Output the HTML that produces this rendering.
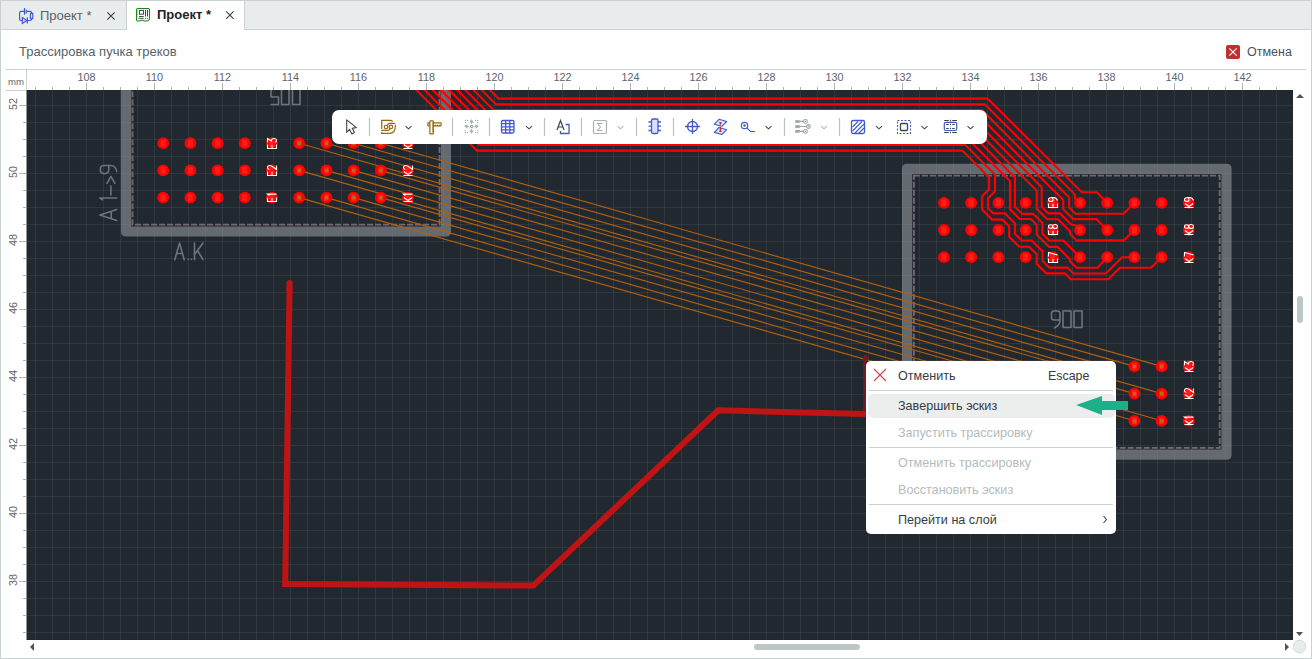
<!DOCTYPE html>
<html><head><meta charset="utf-8"><style>
*{box-sizing:border-box}
html,body{margin:0;padding:0;width:1312px;height:659px;overflow:hidden;background:#fff;font-family:"Liberation Sans",sans-serif}
.a{position:absolute}
</style></head><body>
<svg width="1312" height="659" viewBox="0 0 1312 659" style="position:absolute;left:0;top:0">
<defs><clipPath id="cv"><rect x="26.5" y="90" width="1266.5" height="550"/></clipPath></defs>
<rect x="26.5" y="90" width="1266.5" height="550" fill="#222830"/>
<g clip-path="url(#cv)">
<path d="M35.5 90V640M52.5 90V640M69.5 90V640M86.5 90V640M103.5 90V640M120.5 90V640M137.5 90V640M154.5 90V640M171.5 90V640M188.5 90V640M205.5 90V640M222.5 90V640M239.5 90V640M256.5 90V640M273.5 90V640M290.5 90V640M307.5 90V640M324.5 90V640M341.5 90V640M358.5 90V640M375.5 90V640M392.5 90V640M409.5 90V640M426.5 90V640M443.5 90V640M460.5 90V640M477.5 90V640M494.5 90V640M511.5 90V640M528.5 90V640M545.5 90V640M562.5 90V640M579.5 90V640M596.5 90V640M613.5 90V640M630.5 90V640M647.5 90V640M664.5 90V640M681.5 90V640M698.5 90V640M715.5 90V640M732.5 90V640M749.5 90V640M766.5 90V640M783.5 90V640M800.5 90V640M817.5 90V640M834.5 90V640M851.5 90V640M868.5 90V640M885.5 90V640M902.5 90V640M919.5 90V640M936.5 90V640M953.5 90V640M970.5 90V640M987.5 90V640M1004.5 90V640M1021.5 90V640M1038.5 90V640M1055.5 90V640M1072.5 90V640M1089.5 90V640M1106.5 90V640M1123.5 90V640M1140.5 90V640M1157.5 90V640M1174.5 90V640M1191.5 90V640M1208.5 90V640M1225.5 90V640M1242.5 90V640M1259.5 90V640M1276.5 90V640" stroke="rgb(230,222,240)" stroke-opacity="0.075" stroke-width="1" fill="none"/>
<path d="M26.5 88.5H1293M26.5 105.5H1293M26.5 122.5H1293M26.5 139.5H1293M26.5 156.5H1293M26.5 173.5H1293M26.5 190.5H1293M26.5 207.5H1293M26.5 224.5H1293M26.5 241.5H1293M26.5 258.5H1293M26.5 275.5H1293M26.5 292.5H1293M26.5 309.5H1293M26.5 326.5H1293M26.5 343.5H1293M26.5 360.5H1293M26.5 377.5H1293M26.5 394.5H1293M26.5 411.5H1293M26.5 428.5H1293M26.5 445.5H1293M26.5 462.5H1293M26.5 479.5H1293M26.5 496.5H1293M26.5 513.5H1293M26.5 530.5H1293M26.5 547.5H1293M26.5 564.5H1293M26.5 581.5H1293M26.5 598.5H1293M26.5 615.5H1293M26.5 632.5H1293" stroke="rgb(230,222,240)" stroke-opacity="0.075" stroke-width="1" fill="none"/>
<path d="M126 40H446Q451 40 451 45V231.6Q451 236.6 446 236.6H126Q121 236.6 121 231.6V45Q121 40 126 40ZM131.2 50.2V226.4H440.8V50.2Z" fill="#9aa0a6" fill-opacity="0.55" fill-rule="evenodd"/>
<path d="M907 163.8H1226.6Q1231.6 163.8 1231.6 168.8V454.8Q1231.6 459.8 1226.6 459.8H907Q902 459.8 902 454.8V168.8Q902 163.8 907 163.8ZM912.2 174V449.6H1221.4V174Z" fill="#9aa0a6" fill-opacity="0.55" fill-rule="evenodd"/>
<rect x="132.5" y="30" width="307" height="194.6" fill="none" stroke="#78676f" stroke-width="1.8" stroke-dasharray="6 2"/>
<rect x="913.9" y="175.7" width="305.8" height="272.2" fill="none" stroke="#78676f" stroke-width="1.8" stroke-dasharray="6 2"/>
<path d="M174.8 259.7L179.5 243L184.2 259.7M176.5 253.5H182.5M194.5 243V259.7M203 243L194.5 254.5M197.5 250.5L203 259.7M188 259.3h0.3M191.2 259.3h0.3M271 80V97H278.5V104.5H271M281.5 80V104.5H289V80M292.5 80V104.5H300V80M1060 320H1054Q1051.5 320 1051.5 317.5V313.5Q1051.5 311 1054 311H1057.5Q1060 311 1060 313.5V321Q1060 325 1054.5 328M1063 311H1071V327.5H1063ZM1074 311H1082V327.5H1074Z" stroke="#6d737a" stroke-width="1.6" fill="none" stroke-linecap="round" stroke-linejoin="round"/>
<g transform="translate(99.7 220.4) rotate(-90)"><path d="M0 17L5.4 0.2L10.8 17M2.4 11.5H8.4M20.5 2.8L22.4 0.2V17M25.5 11.2H34.3M37.1 7.3L44 11.2L37.1 15.2M54.9 9V4Q54.9 0.6 50.8 0.6Q46.7 0.6 46.7 4.8Q46.7 9.1 50.8 9.1H54.9V11Q54.9 16 49 17" stroke="#6d737a" stroke-width="1.6" fill="none" stroke-linecap="round" stroke-linejoin="round"/></g>
<path d="M299.2 143.2L1080 366.4M299.2 170.4L1080 393.6M299.2 197.6L1080 420.8M326.4 143.2L1107.2 366.4M326.4 170.4L1107.2 393.6M326.4 197.6L1107.2 420.8M353.6 143.2L1134.4 366.4M353.6 170.4L1134.4 393.6M353.6 197.6L1134.4 420.8M380.8 143.2L1161.6 366.4M380.8 170.4L1161.6 393.6M380.8 197.6L1161.6 420.8" stroke="#b0600c" stroke-width="1.15" fill="none"/>
<path d="M408.5 8.6L498.5 98.6L987.6 98.6L1081.8 192.3L1096.8 192.3L1107.2 202.8M406.11 14.38L496.11 104.38L984.8 104.38L1075 194.6L1075 199L1080 202.8M403.72 20.16L493.72 110.16L982 110.16L1069.2 197.4L1069.2 207.5L1075.4 213.7L1123.7 213.7L1134.4 202.8M401.33 25.94L491.33 115.94L979.2 115.94L1063.3 200.1L1063.3 209.2L1073.2 219.1L1096.4 219.1L1107.2 230M398.94 31.72L488.94 121.72L976.4 121.72L1041.7 187.2L1041.7 206.7L1048.4 213.4L1060 213.4L1071.6 225L1075 225L1080 230M396.55 37.5L486.55 127.5L973.6 127.5L1036.7 190.6L1036.7 208.8L1047.1 219.2L1058 219.2L1070 231.2L1070 233.8L1076.4 240.4L1123.7 240.4L1134.4 230M394.16 43.28L484.16 133.28L970.8 133.28L1015 177.5L1015 206.7L1022.2 213.9L1033.4 213.9L1042.5 223L1042.5 233.8L1049.2 240.5L1063.4 240.5L1080 257.2M391.77 49.06L481.77 139.06L968 139.06L1010 181.1L1010 209.2L1019.8 219L1030.9 219L1036.7 224.8L1036.7 234.6L1049 246.9L1057.5 246.9L1070 259.4L1070 261.3L1076.4 267.7L1097.5 267.7L1107.2 257.2M389.38 54.84L479.38 144.84L965.2 144.84L995 174.6L995 191.3L987.9 198.4L987.9 208L993.3 213.4L1005 213.4L1015 223.4L1015 233.8L1021.7 240.5L1031.7 240.5L1042.5 251.3L1042.5 260.9L1049.2 267.6L1067.5 267.6L1073.4 273.5L1105.8 273.5L1122.2 257.2L1134.4 257.2M386.99 60.62L476.99 150.62L962.4 150.62L989.2 177.4L989.2 189.2L982.1 196.3L982.1 209.6L992.1 219.6L1002.5 219.6L1009.2 226.3L1009.2 236.7L1019.2 246.7L1029.2 246.7L1036.7 254.2L1036.7 263.8L1046.3 273.4L1065 273.4L1070.8 279.2L1108.3 279.2L1119.8 267.8L1151.2 267.8L1161.6 257.2" stroke="#ff0000" stroke-width="2.1" fill="none" stroke-linejoin="miter"/>
<path d="M865.5 357V413" stroke="#6e1b24" stroke-width="4.5" stroke-linecap="round" fill="none"/>
<path d="M289.6 286L285.2 584L533.3 585.6L718.2 410.3L866 414" stroke="#c01414" stroke-width="6" stroke-linejoin="miter" fill="none"/>
<path d="M289.6 283L289.4 290" stroke="#c01414" stroke-width="6" stroke-linecap="round" fill="none"/>
<g fill="#ff0000"><circle cx="163.2" cy="143.2" r="5.9"/><circle cx="190.4" cy="143.2" r="5.9"/><circle cx="217.6" cy="143.2" r="5.9"/><circle cx="244.8" cy="143.2" r="5.9"/><circle cx="272" cy="143.2" r="5.9"/><circle cx="299.2" cy="143.2" r="5.9"/><circle cx="326.4" cy="143.2" r="5.9"/><circle cx="353.6" cy="143.2" r="5.9"/><circle cx="380.8" cy="143.2" r="5.9"/><circle cx="408" cy="143.2" r="5.9"/><circle cx="163.2" cy="170.4" r="5.9"/><circle cx="190.4" cy="170.4" r="5.9"/><circle cx="217.6" cy="170.4" r="5.9"/><circle cx="244.8" cy="170.4" r="5.9"/><circle cx="272" cy="170.4" r="5.9"/><circle cx="299.2" cy="170.4" r="5.9"/><circle cx="326.4" cy="170.4" r="5.9"/><circle cx="353.6" cy="170.4" r="5.9"/><circle cx="380.8" cy="170.4" r="5.9"/><circle cx="408" cy="170.4" r="5.9"/><circle cx="163.2" cy="197.6" r="5.9"/><circle cx="190.4" cy="197.6" r="5.9"/><circle cx="217.6" cy="197.6" r="5.9"/><circle cx="244.8" cy="197.6" r="5.9"/><circle cx="272" cy="197.6" r="5.9"/><circle cx="299.2" cy="197.6" r="5.9"/><circle cx="326.4" cy="197.6" r="5.9"/><circle cx="353.6" cy="197.6" r="5.9"/><circle cx="380.8" cy="197.6" r="5.9"/><circle cx="408" cy="197.6" r="5.9"/><circle cx="944" cy="202.8" r="5.9"/><circle cx="971.2" cy="202.8" r="5.9"/><circle cx="998.4" cy="202.8" r="5.9"/><circle cx="1025.6" cy="202.8" r="5.9"/><circle cx="1052.8" cy="202.8" r="5.9"/><circle cx="1080" cy="202.8" r="5.9"/><circle cx="1107.2" cy="202.8" r="5.9"/><circle cx="1134.4" cy="202.8" r="5.9"/><circle cx="1161.6" cy="202.8" r="5.9"/><circle cx="1188.8" cy="202.8" r="5.9"/><circle cx="944" cy="230" r="5.9"/><circle cx="971.2" cy="230" r="5.9"/><circle cx="998.4" cy="230" r="5.9"/><circle cx="1025.6" cy="230" r="5.9"/><circle cx="1052.8" cy="230" r="5.9"/><circle cx="1080" cy="230" r="5.9"/><circle cx="1107.2" cy="230" r="5.9"/><circle cx="1134.4" cy="230" r="5.9"/><circle cx="1161.6" cy="230" r="5.9"/><circle cx="1188.8" cy="230" r="5.9"/><circle cx="944" cy="257.2" r="5.9"/><circle cx="971.2" cy="257.2" r="5.9"/><circle cx="998.4" cy="257.2" r="5.9"/><circle cx="1025.6" cy="257.2" r="5.9"/><circle cx="1052.8" cy="257.2" r="5.9"/><circle cx="1080" cy="257.2" r="5.9"/><circle cx="1107.2" cy="257.2" r="5.9"/><circle cx="1134.4" cy="257.2" r="5.9"/><circle cx="1161.6" cy="257.2" r="5.9"/><circle cx="1188.8" cy="257.2" r="5.9"/><circle cx="944" cy="366.4" r="5.9"/><circle cx="971.2" cy="366.4" r="5.9"/><circle cx="998.4" cy="366.4" r="5.9"/><circle cx="1025.6" cy="366.4" r="5.9"/><circle cx="1052.8" cy="366.4" r="5.9"/><circle cx="1080" cy="366.4" r="5.9"/><circle cx="1107.2" cy="366.4" r="5.9"/><circle cx="1134.4" cy="366.4" r="5.9"/><circle cx="1161.6" cy="366.4" r="5.9"/><circle cx="1188.8" cy="366.4" r="5.9"/><circle cx="944" cy="393.6" r="5.9"/><circle cx="971.2" cy="393.6" r="5.9"/><circle cx="998.4" cy="393.6" r="5.9"/><circle cx="1025.6" cy="393.6" r="5.9"/><circle cx="1052.8" cy="393.6" r="5.9"/><circle cx="1080" cy="393.6" r="5.9"/><circle cx="1107.2" cy="393.6" r="5.9"/><circle cx="1134.4" cy="393.6" r="5.9"/><circle cx="1161.6" cy="393.6" r="5.9"/><circle cx="1188.8" cy="393.6" r="5.9"/><circle cx="944" cy="420.8" r="5.9"/><circle cx="971.2" cy="420.8" r="5.9"/><circle cx="998.4" cy="420.8" r="5.9"/><circle cx="1025.6" cy="420.8" r="5.9"/><circle cx="1052.8" cy="420.8" r="5.9"/><circle cx="1080" cy="420.8" r="5.9"/><circle cx="1107.2" cy="420.8" r="5.9"/><circle cx="1134.4" cy="420.8" r="5.9"/><circle cx="1161.6" cy="420.8" r="5.9"/><circle cx="1188.8" cy="420.8" r="5.9"/></g>
<g fill="#ff1c1c"><rect x="160.7" y="139.7" width="5" height="7"/><rect x="187.9" y="139.7" width="5" height="7"/><rect x="215.1" y="139.7" width="5" height="7"/><rect x="242.3" y="139.7" width="5" height="7"/><rect x="269.5" y="139.7" width="5" height="7"/><rect x="296.7" y="139.7" width="5" height="7"/><rect x="323.9" y="139.7" width="5" height="7"/><rect x="351.1" y="139.7" width="5" height="7"/><rect x="378.3" y="139.7" width="5" height="7"/><rect x="405.5" y="139.7" width="5" height="7"/><rect x="160.7" y="166.9" width="5" height="7"/><rect x="187.9" y="166.9" width="5" height="7"/><rect x="215.1" y="166.9" width="5" height="7"/><rect x="242.3" y="166.9" width="5" height="7"/><rect x="269.5" y="166.9" width="5" height="7"/><rect x="296.7" y="166.9" width="5" height="7"/><rect x="323.9" y="166.9" width="5" height="7"/><rect x="351.1" y="166.9" width="5" height="7"/><rect x="378.3" y="166.9" width="5" height="7"/><rect x="405.5" y="166.9" width="5" height="7"/><rect x="160.7" y="194.1" width="5" height="7"/><rect x="187.9" y="194.1" width="5" height="7"/><rect x="215.1" y="194.1" width="5" height="7"/><rect x="242.3" y="194.1" width="5" height="7"/><rect x="269.5" y="194.1" width="5" height="7"/><rect x="296.7" y="194.1" width="5" height="7"/><rect x="323.9" y="194.1" width="5" height="7"/><rect x="351.1" y="194.1" width="5" height="7"/><rect x="378.3" y="194.1" width="5" height="7"/><rect x="405.5" y="194.1" width="5" height="7"/><rect x="941.5" y="199.3" width="5" height="7"/><rect x="968.7" y="199.3" width="5" height="7"/><rect x="995.9" y="199.3" width="5" height="7"/><rect x="1023.1" y="199.3" width="5" height="7"/><rect x="1050.3" y="199.3" width="5" height="7"/><rect x="1077.5" y="199.3" width="5" height="7"/><rect x="1104.7" y="199.3" width="5" height="7"/><rect x="1131.9" y="199.3" width="5" height="7"/><rect x="1159.1" y="199.3" width="5" height="7"/><rect x="1186.3" y="199.3" width="5" height="7"/><rect x="941.5" y="226.5" width="5" height="7"/><rect x="968.7" y="226.5" width="5" height="7"/><rect x="995.9" y="226.5" width="5" height="7"/><rect x="1023.1" y="226.5" width="5" height="7"/><rect x="1050.3" y="226.5" width="5" height="7"/><rect x="1077.5" y="226.5" width="5" height="7"/><rect x="1104.7" y="226.5" width="5" height="7"/><rect x="1131.9" y="226.5" width="5" height="7"/><rect x="1159.1" y="226.5" width="5" height="7"/><rect x="1186.3" y="226.5" width="5" height="7"/><rect x="941.5" y="253.7" width="5" height="7"/><rect x="968.7" y="253.7" width="5" height="7"/><rect x="995.9" y="253.7" width="5" height="7"/><rect x="1023.1" y="253.7" width="5" height="7"/><rect x="1050.3" y="253.7" width="5" height="7"/><rect x="1077.5" y="253.7" width="5" height="7"/><rect x="1104.7" y="253.7" width="5" height="7"/><rect x="1131.9" y="253.7" width="5" height="7"/><rect x="1159.1" y="253.7" width="5" height="7"/><rect x="1186.3" y="253.7" width="5" height="7"/><rect x="941.5" y="362.9" width="5" height="7"/><rect x="968.7" y="362.9" width="5" height="7"/><rect x="995.9" y="362.9" width="5" height="7"/><rect x="1023.1" y="362.9" width="5" height="7"/><rect x="1050.3" y="362.9" width="5" height="7"/><rect x="1077.5" y="362.9" width="5" height="7"/><rect x="1104.7" y="362.9" width="5" height="7"/><rect x="1131.9" y="362.9" width="5" height="7"/><rect x="1159.1" y="362.9" width="5" height="7"/><rect x="1186.3" y="362.9" width="5" height="7"/><rect x="941.5" y="390.1" width="5" height="7"/><rect x="968.7" y="390.1" width="5" height="7"/><rect x="995.9" y="390.1" width="5" height="7"/><rect x="1023.1" y="390.1" width="5" height="7"/><rect x="1050.3" y="390.1" width="5" height="7"/><rect x="1077.5" y="390.1" width="5" height="7"/><rect x="1104.7" y="390.1" width="5" height="7"/><rect x="1131.9" y="390.1" width="5" height="7"/><rect x="1159.1" y="390.1" width="5" height="7"/><rect x="1186.3" y="390.1" width="5" height="7"/><rect x="941.5" y="417.3" width="5" height="7"/><rect x="968.7" y="417.3" width="5" height="7"/><rect x="995.9" y="417.3" width="5" height="7"/><rect x="1023.1" y="417.3" width="5" height="7"/><rect x="1050.3" y="417.3" width="5" height="7"/><rect x="1077.5" y="417.3" width="5" height="7"/><rect x="1104.7" y="417.3" width="5" height="7"/><rect x="1131.9" y="417.3" width="5" height="7"/><rect x="1159.1" y="417.3" width="5" height="7"/><rect x="1186.3" y="417.3" width="5" height="7"/></g>
<g fill="#b86a10"><rect x="297.6" y="141.6" width="3.4" height="3.4"/><rect x="1078.4" y="364.8" width="3.4" height="3.4"/><rect x="297.6" y="168.8" width="3.4" height="3.4"/><rect x="1078.4" y="392" width="3.4" height="3.4"/><rect x="297.6" y="196" width="3.4" height="3.4"/><rect x="1078.4" y="419.2" width="3.4" height="3.4"/><rect x="324.8" y="141.6" width="3.4" height="3.4"/><rect x="1105.6" y="364.8" width="3.4" height="3.4"/><rect x="324.8" y="168.8" width="3.4" height="3.4"/><rect x="1105.6" y="392" width="3.4" height="3.4"/><rect x="324.8" y="196" width="3.4" height="3.4"/><rect x="1105.6" y="419.2" width="3.4" height="3.4"/><rect x="352" y="141.6" width="3.4" height="3.4"/><rect x="1132.8" y="364.8" width="3.4" height="3.4"/><rect x="352" y="168.8" width="3.4" height="3.4"/><rect x="1132.8" y="392" width="3.4" height="3.4"/><rect x="352" y="196" width="3.4" height="3.4"/><rect x="1132.8" y="419.2" width="3.4" height="3.4"/><rect x="379.2" y="141.6" width="3.4" height="3.4"/><rect x="1160" y="364.8" width="3.4" height="3.4"/><rect x="379.2" y="168.8" width="3.4" height="3.4"/><rect x="1160" y="392" width="3.4" height="3.4"/><rect x="379.2" y="196" width="3.4" height="3.4"/><rect x="1160" y="419.2" width="3.4" height="3.4"/></g>
<g fill="none" stroke="#ffffff" stroke-width="1.1" stroke-linejoin="miter"><g transform="translate(267.5 148.5) rotate(-90)"><path d="M4 0H0V9H4M0 4.5H3.4"/><path transform="translate(6 0)" d="M0 0H4L1.6 3.8Q4 3.8 4 6.4Q4 9 2 9Q0.3 9 0 7.6"/></g><g transform="translate(403.5 148.5) rotate(-90)"><path d="M0 0V9M0 4.5H1M4 0.3L1 4.5L4 8.7"/><path transform="translate(6 0)" d="M0 0H4L1.6 3.8Q4 3.8 4 6.4Q4 9 2 9Q0.3 9 0 7.6"/></g><g transform="translate(267.5 175.5) rotate(-90)"><path d="M4 0H0V9H4M0 4.5H3.4"/><path transform="translate(6 0)" d="M0 1.8Q0.4 0 2 0Q4 0 4 2.2Q4 4 0 9H4"/></g><g transform="translate(403.5 175.5) rotate(-90)"><path d="M0 0V9M0 4.5H1M4 0.3L1 4.5L4 8.7"/><path transform="translate(6 0)" d="M0 1.8Q0.4 0 2 0Q4 0 4 2.2Q4 4 0 9H4"/></g><g transform="translate(267.5 201.5) rotate(-90)"><path d="M4 0H0V9H4M0 4.5H3.4"/><path transform="translate(6 0)" d="M0 2L1.4 0V9"/></g><g transform="translate(403.5 201.5) rotate(-90)"><path d="M0 0V9M0 4.5H1M4 0.3L1 4.5L4 8.7"/><path transform="translate(6 0)" d="M0 2L1.4 0V9"/></g><g transform="translate(1048.5 207.5) rotate(-90)"><path d="M4 0H0V9H4M0 4.5H3.4"/><path transform="translate(6 0)" d="M4 4Q4 0 2 0Q0 0 0 2.3Q0 4.6 2 4.6Q4 4.6 4 3V5Q4 8 1 9"/></g><g transform="translate(1184.5 207.5) rotate(-90)"><path d="M0 0V9M0 4.5H1M4 0.3L1 4.5L4 8.7"/><path transform="translate(6 0)" d="M4 4Q4 0 2 0Q0 0 0 2.3Q0 4.6 2 4.6Q4 4.6 4 3V5Q4 8 1 9"/></g><g transform="translate(1048.5 234.5) rotate(-90)"><path d="M4 0H0V9H4M0 4.5H3.4"/><path transform="translate(6 0)" d="M2 4.2Q0.2 4.2 0.2 2.1Q0.2 0 2 0Q3.8 0 3.8 2.1Q3.8 4.2 2 4.2Q0 4.2 0 6.6Q0 9 2 9Q4 9 4 6.6Q4 4.2 2 4.2Z"/></g><g transform="translate(1184.5 234.5) rotate(-90)"><path d="M0 0V9M0 4.5H1M4 0.3L1 4.5L4 8.7"/><path transform="translate(6 0)" d="M2 4.2Q0.2 4.2 0.2 2.1Q0.2 0 2 0Q3.8 0 3.8 2.1Q3.8 4.2 2 4.2Q0 4.2 0 6.6Q0 9 2 9Q4 9 4 6.6Q4 4.2 2 4.2Z"/></g><g transform="translate(1048.5 262.5) rotate(-90)"><path d="M4 0H0V9H4M0 4.5H3.4"/><path transform="translate(6 0)" d="M0 0H4L1.5 9"/></g><g transform="translate(1184.5 262.5) rotate(-90)"><path d="M0 0V9M0 4.5H1M4 0.3L1 4.5L4 8.7"/><path transform="translate(6 0)" d="M0 0H4L1.5 9"/></g><g transform="translate(1048.5 371.5) rotate(-90)"><path d="M4 0H0V9H4M0 4.5H3.4"/><path transform="translate(6 0)" d="M0 0H4L1.6 3.8Q4 3.8 4 6.4Q4 9 2 9Q0.3 9 0 7.6"/></g><g transform="translate(1184.5 371.5) rotate(-90)"><path d="M0 0V9M0 4.5H1M4 0.3L1 4.5L4 8.7"/><path transform="translate(6 0)" d="M0 0H4L1.6 3.8Q4 3.8 4 6.4Q4 9 2 9Q0.3 9 0 7.6"/></g><g transform="translate(1048.5 398.5) rotate(-90)"><path d="M4 0H0V9H4M0 4.5H3.4"/><path transform="translate(6 0)" d="M0 1.8Q0.4 0 2 0Q4 0 4 2.2Q4 4 0 9H4"/></g><g transform="translate(1184.5 398.5) rotate(-90)"><path d="M0 0V9M0 4.5H1M4 0.3L1 4.5L4 8.7"/><path transform="translate(6 0)" d="M0 1.8Q0.4 0 2 0Q4 0 4 2.2Q4 4 0 9H4"/></g><g transform="translate(1048.5 424.5) rotate(-90)"><path d="M4 0H0V9H4M0 4.5H3.4"/><path transform="translate(6 0)" d="M0 2L1.4 0V9"/></g><g transform="translate(1184.5 424.5) rotate(-90)"><path d="M0 0V9M0 4.5H1M4 0.3L1 4.5L4 8.7"/><path transform="translate(6 0)" d="M0 2L1.4 0V9"/></g></g>
</g>
</svg>
<!-- window border -->
<div class="a" style="left:0;top:0;width:1312px;height:659px;border:1px solid #c9d1d1;pointer-events:none"></div>
<!-- tab bar -->
<div class="a" style="left:1px;top:1px;width:1310px;height:29px;background:#e9ecec;border-bottom:1px solid #c9d1d1"></div>
<div class="a" style="left:126px;top:1px;width:1px;height:28px;background:#c9d1d1"></div>
<div class="a" style="left:127px;top:1px;width:117px;height:29px;background:#fff"></div>
<div class="a" style="left:244px;top:1px;width:1px;height:29px;background:#c9d1d1"></div>
<div class="a" style="left:40px;top:8px;font-size:13px;color:#5a6068;white-space:nowrap">Проект *</div>
<div class="a" style="left:157px;top:7px;font-size:13px;font-weight:bold;color:#1e2328;white-space:nowrap">Проект *</div>
<svg class="a" style="left:0;top:0" width="260" height="30">
 <g stroke="#3f57cf" stroke-width="1.15" fill="none">
  <path d="M24.5 11.4H21.2Q19.6 11.4 19.6 13V18.9Q19.6 20.5 21.2 20.5H22.3M27.4 20.5H30Q31.6 20.5 31.6 18.8M31.6 13.3V13Q31.6 11.4 30 11.4H26.5"/>
  <path d="M24.5 8V14.7M26.4 9.6Q25.9 11.5 26.4 13.5"/>
  <path d="M22.3 17.5L27 20.5L22.3 23.5Z" fill="#d0dcff"/>
  <path d="M27.4 17.2V23.5"/>
  <rect x="30.4" y="13.3" width="2.4" height="5.4" fill="#d0dcff"/>
 </g>
 <path d="M107.3 12.3L114.7 19.7M114.7 12.3L107.3 19.7" stroke="#3a4248" stroke-width="1.1"/>
 <g fill="none" stroke-width="1.05">
  <path d="M137.7 8.5H148.3Q149.5 8.5 149.5 9.7V19.3L147.8 21H144.2L143.5 20.2H140.5L139.8 21H137.7Q136.5 21 136.5 19.8V9.7Q136.5 8.5 137.7 8.5Z" stroke="#128c12"/>
  <path d="M136.5 10.4h1M136.5 12.4h1M136.5 14.4h1" stroke="#128c12"/>
  <rect x="139.5" y="10.4" width="4" height="3.8" stroke="#444b52"/>
  <path d="M139.1 16.5H143.7M138.4 18.3H143.7M145.5 10V16.6M147.5 10V16.6" stroke="#444b52"/>
 </g>
 <rect x="145" y="17.8" width="1" height="1" fill="#444b52"/><rect x="147" y="17.8" width="1" height="1" fill="#444b52"/>
 <path d="M226.2 11.4L233.6 18.8M233.6 11.4L226.2 18.8" stroke="#3a4248" stroke-width="1.1"/>
</svg>
<!-- header -->
<div class="a" style="left:19px;top:44px;font-size:13px;color:#59616b;white-space:nowrap">Трассировка пучка треков</div>
<div class="a" style="left:1226px;top:45px;width:14px;height:14px;background:#c0302e;border-radius:2px"></div>
<svg class="a" style="left:1226px;top:45px" width="14" height="14"><path d="M3.3 3.3L10.7 10.7M10.7 3.3L3.3 10.7" stroke="#fff" stroke-width="1.1"/></svg>
<div class="a" style="left:1247px;top:45px;font-size:12.5px;color:#4a535d;white-space:nowrap">Отмена</div>
<!-- ruler -->
<div class="a" style="left:6px;top:69px;width:1300px;height:1px;background:#c9d1d1"></div>
<div class="a" style="left:6px;top:90px;width:20px;height:1px;background:#c9d1d1"></div>
<div class="a" style="left:26px;top:70px;width:1px;height:20px;background:#c9d1d1"></div>
<div class="a" style="left:8px;top:75.5px;font-size:9.6px;color:#5d646c">mm</div>
<div class="a" style="left:66.4px;top:71px;width:40px;text-align:center;font-size:10.8px;color:#5d646c">108</div>
<div class="a" style="left:134.4px;top:71px;width:40px;text-align:center;font-size:10.8px;color:#5d646c">110</div>
<div class="a" style="left:202.4px;top:71px;width:40px;text-align:center;font-size:10.8px;color:#5d646c">112</div>
<div class="a" style="left:270.4px;top:71px;width:40px;text-align:center;font-size:10.8px;color:#5d646c">114</div>
<div class="a" style="left:338.4px;top:71px;width:40px;text-align:center;font-size:10.8px;color:#5d646c">116</div>
<div class="a" style="left:406.4px;top:71px;width:40px;text-align:center;font-size:10.8px;color:#5d646c">118</div>
<div class="a" style="left:474.4px;top:71px;width:40px;text-align:center;font-size:10.8px;color:#5d646c">120</div>
<div class="a" style="left:542.4px;top:71px;width:40px;text-align:center;font-size:10.8px;color:#5d646c">122</div>
<div class="a" style="left:610.4px;top:71px;width:40px;text-align:center;font-size:10.8px;color:#5d646c">124</div>
<div class="a" style="left:678.4px;top:71px;width:40px;text-align:center;font-size:10.8px;color:#5d646c">126</div>
<div class="a" style="left:746.4px;top:71px;width:40px;text-align:center;font-size:10.8px;color:#5d646c">128</div>
<div class="a" style="left:814.4px;top:71px;width:40px;text-align:center;font-size:10.8px;color:#5d646c">130</div>
<div class="a" style="left:882.4px;top:71px;width:40px;text-align:center;font-size:10.8px;color:#5d646c">132</div>
<div class="a" style="left:950.4px;top:71px;width:40px;text-align:center;font-size:10.8px;color:#5d646c">134</div>
<div class="a" style="left:1018.4px;top:71px;width:40px;text-align:center;font-size:10.8px;color:#5d646c">136</div>
<div class="a" style="left:1086.4px;top:71px;width:40px;text-align:center;font-size:10.8px;color:#5d646c">138</div>
<div class="a" style="left:1154.4px;top:71px;width:40px;text-align:center;font-size:10.8px;color:#5d646c">140</div>
<div class="a" style="left:1222.4px;top:71px;width:40px;text-align:center;font-size:10.8px;color:#5d646c">142</div>
<div class="a" style="left:-7px;top:96.9px;width:40px;height:14px;line-height:14px;text-align:center;font-size:10.8px;color:#5d646c;transform:rotate(-90deg)">52</div>
<div class="a" style="left:-7px;top:164.9px;width:40px;height:14px;line-height:14px;text-align:center;font-size:10.8px;color:#5d646c;transform:rotate(-90deg)">50</div>
<div class="a" style="left:-7px;top:232.9px;width:40px;height:14px;line-height:14px;text-align:center;font-size:10.8px;color:#5d646c;transform:rotate(-90deg)">48</div>
<div class="a" style="left:-7px;top:300.9px;width:40px;height:14px;line-height:14px;text-align:center;font-size:10.8px;color:#5d646c;transform:rotate(-90deg)">46</div>
<div class="a" style="left:-7px;top:368.9px;width:40px;height:14px;line-height:14px;text-align:center;font-size:10.8px;color:#5d646c;transform:rotate(-90deg)">44</div>
<div class="a" style="left:-7px;top:436.9px;width:40px;height:14px;line-height:14px;text-align:center;font-size:10.8px;color:#5d646c;transform:rotate(-90deg)">42</div>
<div class="a" style="left:-7px;top:504.9px;width:40px;height:14px;line-height:14px;text-align:center;font-size:10.8px;color:#5d646c;transform:rotate(-90deg)">40</div>
<div class="a" style="left:-7px;top:572.9px;width:40px;height:14px;line-height:14px;text-align:center;font-size:10.8px;color:#5d646c;transform:rotate(-90deg)">38</div>
<svg class="a" style="left:0;top:0" width="1312" height="659"><path d="M35.5 87V90M52.5 87V90M69.5 87V90M86.5 83V90M103.5 87V90M120.5 87V90M137.5 87V90M154.5 83V90M171.5 87V90M188.5 87V90M205.5 87V90M222.5 83V90M239.5 87V90M256.5 87V90M273.5 87V90M290.5 83V90M307.5 87V90M324.5 87V90M341.5 87V90M358.5 83V90M375.5 87V90M392.5 87V90M409.5 87V90M426.5 83V90M443.5 87V90M460.5 87V90M477.5 87V90M494.5 83V90M511.5 87V90M528.5 87V90M545.5 87V90M562.5 83V90M579.5 87V90M596.5 87V90M613.5 87V90M630.5 83V90M647.5 87V90M664.5 87V90M681.5 87V90M698.5 83V90M715.5 87V90M732.5 87V90M749.5 87V90M766.5 83V90M783.5 87V90M800.5 87V90M817.5 87V90M834.5 83V90M851.5 87V90M868.5 87V90M885.5 87V90M902.5 83V90M919.5 87V90M936.5 87V90M953.5 87V90M970.5 83V90M987.5 87V90M1004.5 87V90M1021.5 87V90M1038.5 83V90M1055.5 87V90M1072.5 87V90M1089.5 87V90M1106.5 83V90M1123.5 87V90M1140.5 87V90M1157.5 87V90M1174.5 83V90M1191.5 87V90M1208.5 87V90M1225.5 87V90M1242.5 83V90M1259.5 87V90M1276.5 87V90M19 105.5H26M23 122.5H26M23 139.5H26M23 156.5H26M19 173.5H26M23 190.5H26M23 207.5H26M23 224.5H26M19 241.5H26M23 258.5H26M23 275.5H26M23 292.5H26M19 309.5H26M23 326.5H26M23 343.5H26M23 360.5H26M19 377.5H26M23 394.5H26M23 411.5H26M23 428.5H26M19 445.5H26M23 462.5H26M23 479.5H26M23 496.5H26M19 513.5H26M23 530.5H26M23 547.5H26M23 564.5H26M19 581.5H26M23 598.5H26M23 615.5H26M23 632.5H26" stroke="#aeb8b8" stroke-width="1" fill="none"/></svg>
<!-- scrollbars -->
<div class="a" style="left:1297px;top:296px;width:6px;height:27px;border-radius:3px;background:#bcc8c8"></div>
<div class="a" style="left:754px;top:644px;width:106px;height:6px;border-radius:3px;background:#bcc8c8"></div>
<svg class="a" style="left:0;top:0" width="1312" height="659">
 <path d="M1296 98H1304L1300 94Z" fill="#4d5656"/>
 <path d="M1296 632H1303L1299.5 636Z" fill="#4d5656"/>
 <path d="M34 643V651L30 647Z" fill="#4d5656"/>
 <path d="M1285 643V651L1289 647Z" fill="#4d5656"/>
 <circle cx="1299.5" cy="646.5" r="6.3" fill="#e9ecec" stroke="#d3dada" stroke-width="1"/>
</svg>
<div class="a" style="left:332px;top:110px;width:655px;height:34px;background:#fff;border-radius:7px"></div>
<svg class="a" style="left:0;top:0" width="1312" height="200">
 <g stroke="#b9c3c3" stroke-width="1.2">
  <path d="M369.5 118V136M452.5 118V136M489.5 118V136M544.5 118V136M581.5 118V136M636.5 118V136M673.5 118V136M784.5 118V136M839.5 118V136"/>
 </g>
 <!-- cursor -->
 <path d="M346.7 119.9V132.4L349.5 129.4L351.9 134L354.4 132.6L352.3 128.3L356.4 127.6Z" fill="none" stroke="#3d464c" stroke-width="1.1" stroke-linejoin="round"/>
 <!-- chevrons -->
 <g fill="none" stroke-width="1.1">
  <path d="M405.5 126.1L408.5 128.8L411.5 126.1" stroke="#3c444c"/>
  <path d="M526 126.1L529 128.8L532 126.1" stroke="#3c444c"/>
  <path d="M617.5 126.1L620.5 128.8L623.5 126.1" stroke="#b0baba"/>
  <path d="M765.5 126.1L768.5 128.8L771.5 126.1" stroke="#3c444c"/>
  <path d="M821 126.1L824 128.8L827 126.1" stroke="#b0baba"/>
  <path d="M876 126.1L879 128.8L882 126.1" stroke="#3c444c"/>
  <path d="M921.5 126.1L924.5 128.8L927.5 126.1" stroke="#3c444c"/>
  <path d="M967.5 126.1L970.5 128.8L973.5 126.1" stroke="#3c444c"/>
 </g>
 <!-- route icon gold -->
 <g fill="none" stroke="#94690c" stroke-width="1.2" stroke-linecap="round">
  <path d="M381.7 128.5V120.3H390.2Q391.5 120.3 392.4 121.2"/>
  <path d="M395.4 125.2Q395.4 133.4 389.5 133.4H381.7V132.4"/>
  <path d="M394.7 123.3H389.5Q388.4 123.3 387.3 125.3"/>
  <path d="M381.7 130.4H388.2Q389.2 130.4 390 128.7"/>
  <circle cx="386" cy="127" r="1.75"/><circle cx="390.9" cy="126.9" r="1.75"/>
 </g>
 <!-- ruler icon gold -->
 <g fill="none" stroke="#94690c" stroke-width="1.2">
  <rect x="427.9" y="122.8" width="13.2" height="3.1" rx="0.5"/>
  <rect x="429.9" y="120.9" width="3.4" height="13" rx="0.5" fill="#fff"/>
  <path d="M433.3 123.2h-1.1M433.3 125.2h-1.1M433.3 127.2h-1.1M433.3 129.2h-1.1M433.3 131.2h-1.1M435.4 125.9v-1.1M437.4 125.9v-1.1M439.4 125.9v-1.1"/>
 </g>
 <!-- move grid grey -->
 <g fill="#a5afaf">
  <path d="M471.5 119.2L469.2 122.6H470.9V123.7H472.1V122.6H473.9Z"/>
  <path d="M471.5 133.8L469.2 130.4H470.9V129.3H472.1V130.4H473.9Z"/>
  <path d="M464 126.1L467.5 124.2V125.9H468.6V127.1H467.5V128.8Z"/>
  <path d="M479 126.1L475.5 124.2V125.9H474.4V127.1H475.5V128.8Z"/>
  <rect x="464.8" y="119.8" width="1.2" height="1.2"/><rect x="467" y="119.8" width="1.2" height="1.2"/><rect x="464.8" y="122" width="1.2" height="1.2"/>
  <rect x="475" y="119.8" width="1.2" height="1.2"/><rect x="477.1" y="119.8" width="1.2" height="1.2"/><rect x="477.1" y="122" width="1.2" height="1.2"/>
  <rect x="464.8" y="130" width="1.2" height="1.2"/><rect x="464.8" y="132.1" width="1.2" height="1.2"/><rect x="467" y="132.1" width="1.2" height="1.2"/>
  <rect x="477.1" y="130" width="1.2" height="1.2"/><rect x="475" y="132.1" width="1.2" height="1.2"/><rect x="477.1" y="132.1" width="1.2" height="1.2"/>
 </g>
 <rect x="470.5" y="125.5" width="2.2" height="2.2" fill="none" stroke="#a5afaf" stroke-width="1.1"/>
 <!-- grid icon blue -->
 <g fill="none" stroke="#4459cc" stroke-width="1.3">
  <rect x="501.5" y="120.5" width="12.5" height="12.5" rx="1.5"/>
  <path d="M505.7 120.5V133M509.8 120.5V133M501.5 123.7H514M501.5 126.8H514M501.5 129.9H514"/>
 </g>
 <!-- text icon -->
 <path d="M557 130L560.5 120.5L564 130M558.2 127H562.8" fill="none" stroke="#3c444c" stroke-width="1.2"/>
 <path d="M565.5 124.5H569V133.5H560.5V131" fill="none" stroke="#4459cc" stroke-width="1.3"/>
 <!-- sigma box -->
 <rect x="593.5" y="120.5" width="13" height="13" rx="1.2" fill="none" stroke="#a9b3b3" stroke-width="1.2"/>
 <path d="M602.5 123.5H597.5L600.5 127L597.5 130.5H602.5" fill="none" stroke="#a9b3b3" stroke-width="1.1"/>
 <!-- IC chip -->
 <rect x="651.5" y="119" width="6.5" height="14.5" rx="1.5" fill="#d8e0fa" stroke="#4459cc" stroke-width="1.3"/>
 <path d="M648.5 122H651.5M648.5 126.2H651.5M648.5 130.5H651.5M658 122H661M658 126.2H661M658 130.5H661" stroke="#4459cc" stroke-width="1.3"/>
 <!-- crosshair -->
 <circle cx="692.5" cy="126.5" r="5" fill="none" stroke="#4459cc" stroke-width="1.3"/>
 <path d="M685 126.5H700M692.5 119V134" stroke="#4459cc" stroke-width="1.3"/>
 <!-- via stack -->
 <path d="M714.3 124.2L719 119.3L726.7 121.5L721.9 126.3Z" fill="#dce6fb" stroke="#4459cc" stroke-width="1.1" stroke-linejoin="round"/>
 <path d="M714.3 132.4L719 127.5L726.7 129.7L721.9 134.5Z" fill="#dce6fb" stroke="#4459cc" stroke-width="1.1" stroke-linejoin="round"/>
 <path d="M720.4 122.6V124.8M719.2 122.6H721.6M720.4 126.8V131.3M719.2 131.3H721.6" stroke="#c83030" stroke-width="1.3"/>
 <!-- probe -->
 <circle cx="744.5" cy="125.5" r="3.2" fill="none" stroke="#4459cc" stroke-width="1.2"/>
 <circle cx="744.5" cy="125.5" r="1.3" fill="#4459cc"/>
 <path d="M746.8 127.8L750.5 131.5H755" fill="none" stroke="#4459cc" stroke-width="1.2"/>
 <!-- net tree grey -->
 <g fill="#9aa5a5">
  <rect x="795.2" y="120.2" width="4.6" height="2.6"/><rect x="795.2" y="125.2" width="4.6" height="2.7"/><rect x="795.2" y="130" width="4.6" height="2.7"/>
  <circle cx="805.4" cy="121.4" r="0.7"/><circle cx="808.4" cy="126.5" r="0.7"/><circle cx="805.4" cy="131.4" r="0.7"/>
 </g>
 <g fill="none" stroke="#9aa5a5" stroke-width="1.1">
  <path d="M799.8 121.4H803.4M799.8 126.5H806.4M799.8 131.4H803.4"/>
  <circle cx="805.4" cy="121.4" r="1.9"/><circle cx="808.4" cy="126.5" r="1.9"/><circle cx="805.4" cy="131.4" r="1.9"/>
 </g>
 <!-- hatched square -->
 <rect x="851.5" y="120.5" width="13" height="13" rx="1.5" fill="none" stroke="#4459cc" stroke-width="1.3"/>
 <path d="M852.5 127L858 121.5M852.5 131L862 121.5M855 133L864 124M859 133L864 128" stroke="#4459cc" stroke-width="1.1"/>
 <!-- dashed box -->
 <rect x="897.5" y="120.5" width="13" height="13" fill="none" stroke="#4459cc" stroke-width="1.1" stroke-dasharray="2 1.5"/>
 <rect x="900.5" y="123.5" width="7" height="7" rx="1" fill="none" stroke="#3c444c" stroke-width="1.3"/>
 <!-- table icon -->
 <rect x="944.3" y="122.3" width="12.4" height="8.2" rx="1.5" fill="none" stroke="#4459cc" stroke-width="1.2"/>
 <g stroke="#3c444c" stroke-width="1.1">
  <path d="M944.2 120.5H948.8M952.2 120.5H956.9M944.2 132.5H948.8M952.2 132.5H956.9M946.2 124.5H948.8M952.2 124.5H954.7M946.2 128.5H948.8M952.2 128.5H954.7"/>
  <path d="M950.5 119.9v1.2M950.5 123.9v1.2M950.5 127.9v1.2M950.5 131.9v1.2"/>
 </g>
 <path d="M950.5 119V134" stroke="#3c444c" stroke-width="0.6" stroke-opacity="0.35"/>
</svg>

<div class="a" style="left:866px;top:361px;width:250px;height:173px;background:#fff;border-radius:5px"></div>
<div class="a" style="left:868px;top:394px;width:247px;height:24px;background:#eceeee;border-radius:5px"></div>
<div class="a" style="left:869px;top:390px;width:244px;height:1px;background:#c9d1d1"></div>
<div class="a" style="left:869px;top:447px;width:244px;height:1px;background:#c9d1d1"></div>
<div class="a" style="left:869px;top:504px;width:244px;height:1px;background:#c9d1d1"></div>
<svg class="a" style="left:866px;top:361px" width="250" height="173">
 <path d="M8 8L20 20M20 8L8 20" stroke="#c84a4a" stroke-width="1.2"/>
 <path d="M237.5 155L240.5 158.5L237.5 162" fill="none" stroke="#3c444c" stroke-width="1.1"/>
</svg>
<div class="a" style="left:898px;top:369px;font-size:12.6px;color:#363c43;white-space:nowrap">Отменить</div>
<div class="a" style="left:1048px;top:369px;font-size:12.4px;color:#363c43;white-space:nowrap">Escape</div>
<div class="a" style="left:898px;top:399px;font-size:12.6px;color:#363c43;white-space:nowrap">Завершить эскиз</div>
<div class="a" style="left:898px;top:426px;font-size:12.6px;color:#b3bcbc;white-space:nowrap">Запустить трассировку</div>
<div class="a" style="left:898px;top:456px;font-size:12.6px;color:#b3bcbc;white-space:nowrap">Отменить трассировку</div>
<div class="a" style="left:898px;top:483px;font-size:12.6px;color:#b3bcbc;white-space:nowrap">Восстановить эскиз</div>
<div class="a" style="left:898px;top:513px;font-size:12.6px;color:#363c43;white-space:nowrap">Перейти на слой</div>
<svg class="a" style="left:1070px;top:390px" width="70" height="30">
 <path d="M6.2 15.1L32 6V11H58V20H32V25Z" fill="#1daf8a"/>
</svg>


</body></html>
